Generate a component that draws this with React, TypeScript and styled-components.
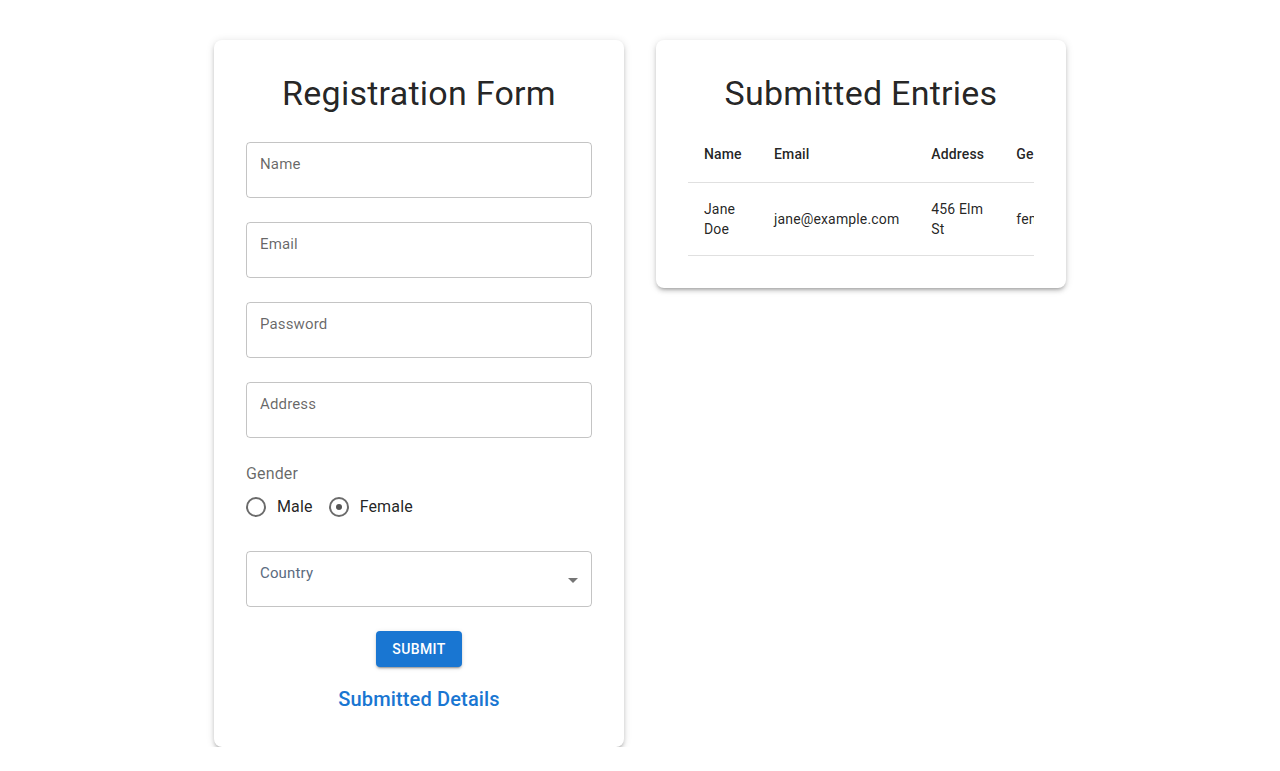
import React from "react";
import styled, { createGlobalStyle } from "styled-components";

const Global = createGlobalStyle`
  html, body { margin: 0; padding: 0; background: #fff; }
  body { font-family: Roboto, "Noto Sans", Arial, sans-serif; color: rgba(0,0,0,0.87); }
  * { box-sizing: border-box; }
`;

const Page = styled.div`
  display: flex;
  justify-content: center;
  align-items: flex-start;
  gap: 32px;
  padding-top: 40px;
`;

const Card = styled.div`
  width: 410px;
  background: #fff;
  border-radius: 8px;
  padding: 32px;
  box-shadow: 0px 3px 3px -2px rgba(0,0,0,0.2), 0px 3px 4px 0px rgba(0,0,0,0.14), 0px 1px 8px 0px rgba(0,0,0,0.12);
  display: flex;
  flex-direction: column;
`;

const Title = styled.h4<{ $mb: number }>`
  margin: 0 0 ${(p) => p.$mb}px;
  font-size: 34px;
  font-weight: 400;
  line-height: 42px;
  letter-spacing: 0.25px;
  text-align: center;
  color: rgba(0,0,0,0.87);
`;

const Field = styled.div<{ $mb: number }>`
  position: relative;
  height: 56px;
  border: 1px solid rgba(0,0,0,0.23);
  border-radius: 4px;
  margin-bottom: ${(p) => p.$mb}px;
  padding: 12px 13px 11px;
  display: flex;
  justify-content: space-between;
`;

const FieldLabel = styled.span<{ $tint?: boolean }>`
  font-size: 15px;
  line-height: 18px;
  color: ${(p) => (p.$tint ? "#5b6b80" : "rgba(0,0,0,0.6)")};
  letter-spacing: 0.15px;
`;

const Arrow = styled.span`
  align-self: center;
  margin-top: 1px;
  width: 0;
  height: 0;
  border-left: 5px solid transparent;
  border-right: 5px solid transparent;
  border-top: 5px solid #757575;
`;

const GroupLabel = styled.div`
  font-size: 16px;
  line-height: 24px;
  color: rgba(0,0,0,0.6);
  letter-spacing: 0.15px;
`;

const RadioRow = styled.div`
  display: flex;
  align-items: center;
  height: 42px;
  gap: 16px;
  margin-bottom: 23px;
`;

const RadioItem = styled.label`
  display: flex;
  align-items: center;
  gap: 11px;
  font-size: 16px;
  line-height: 24px;
  letter-spacing: 0.15px;
  color: rgba(0,0,0,0.87);
`;

const Circle = styled.span<{ $checked?: boolean }>`
  width: 20px;
  height: 20px;
  border: 2px solid #6b6b6b;
  border-radius: 50%;
  display: flex;
  align-items: center;
  justify-content: center;
  &::after {
    content: "";
    width: 6px;
    height: 6px;
    border-radius: 50%;
    background: ${(p) => (p.$checked ? "#555" : "transparent")};
  }
`;

const ButtonRow = styled.div`
  display: flex;
  justify-content: center;
  margin-top: 24px;
`;

const SubmitButton = styled.button`
  height: 36px;
  padding: 0 16px;
  border: none;
  border-radius: 4px;
  background: #1976d2;
  color: #fff;
  font-family: inherit;
  font-size: 14px;
  font-weight: 500;
  letter-spacing: 0.4px;
  text-transform: uppercase;
  box-shadow: 0px 3px 1px -2px rgba(0,0,0,0.2), 0px 2px 2px 0px rgba(0,0,0,0.14), 0px 1px 5px 0px rgba(0,0,0,0.12);
`;

const LinkTitle = styled.div`
  margin-top: 16px;
  text-align: center;
  font-size: 20px;
  font-weight: 500;
  line-height: 32px;
  color: #1976d2;
  letter-spacing: 0.15px;
`;

const TableWrap = styled.div`
  width: 346px;
  overflow: hidden;
`;

const Table = styled.table`
  border-collapse: collapse;
  font-size: 14px;
  letter-spacing: 0.15px;
`;

const Th = styled.th<{ $w: number }>`
  text-align: left;
  font-weight: 500;
  line-height: 24px;
  padding: 16px;
  width: ${(p) => p.$w}px;
  min-width: ${(p) => p.$w}px;
  border-bottom: 1px solid rgba(224,224,224,1);
  color: rgba(0,0,0,0.87);
  white-space: nowrap;
`;

const Td = styled.td`
  text-align: left;
  line-height: 20px;
  padding: 16px;
  border-bottom: 1px solid rgba(224,224,224,1);
  color: rgba(0,0,0,0.87);
`;

const fields = ["Name", "Email", "Password", "Address"];

export default function App() {
  return (
    <>
      <Global />
      <Page>
        <Card>
          <Title $mb={28}>Registration Form</Title>
          {fields.map((f) => (
            <Field key={f} $mb={24}>
              <FieldLabel>{f}</FieldLabel>
            </Field>
          ))}
          <GroupLabel>Gender</GroupLabel>
          <RadioRow>
            <RadioItem>
              <Circle />
              Male
            </RadioItem>
            <RadioItem>
              <Circle $checked />
              Female
            </RadioItem>
          </RadioRow>
          <Field $mb={0}>
            <FieldLabel $tint>Country</FieldLabel>
            <Arrow />
          </Field>
          <ButtonRow>
            <SubmitButton>Submit</SubmitButton>
          </ButtonRow>
          <LinkTitle>Submitted Details</LinkTitle>
        </Card>
        <Card>
          <Title $mb={12}>Submitted Entries</Title>
          <TableWrap>
            <Table>
              <thead>
                <tr>
                  <Th $w={70}>Name</Th>
                  <Th $w={157}>Email</Th>
                  <Th $w={85}>Address</Th>
                  <Th $w={90}>Gender</Th>
                </tr>
              </thead>
              <tbody>
                <tr>
                  <Td>Jane Doe</Td>
                  <Td>jane@example.com</Td>
                  <Td>456 Elm St</Td>
                  <Td>female</Td>
                </tr>
              </tbody>
            </Table>
          </TableWrap>
        </Card>
      </Page>
    </>
  );
}
